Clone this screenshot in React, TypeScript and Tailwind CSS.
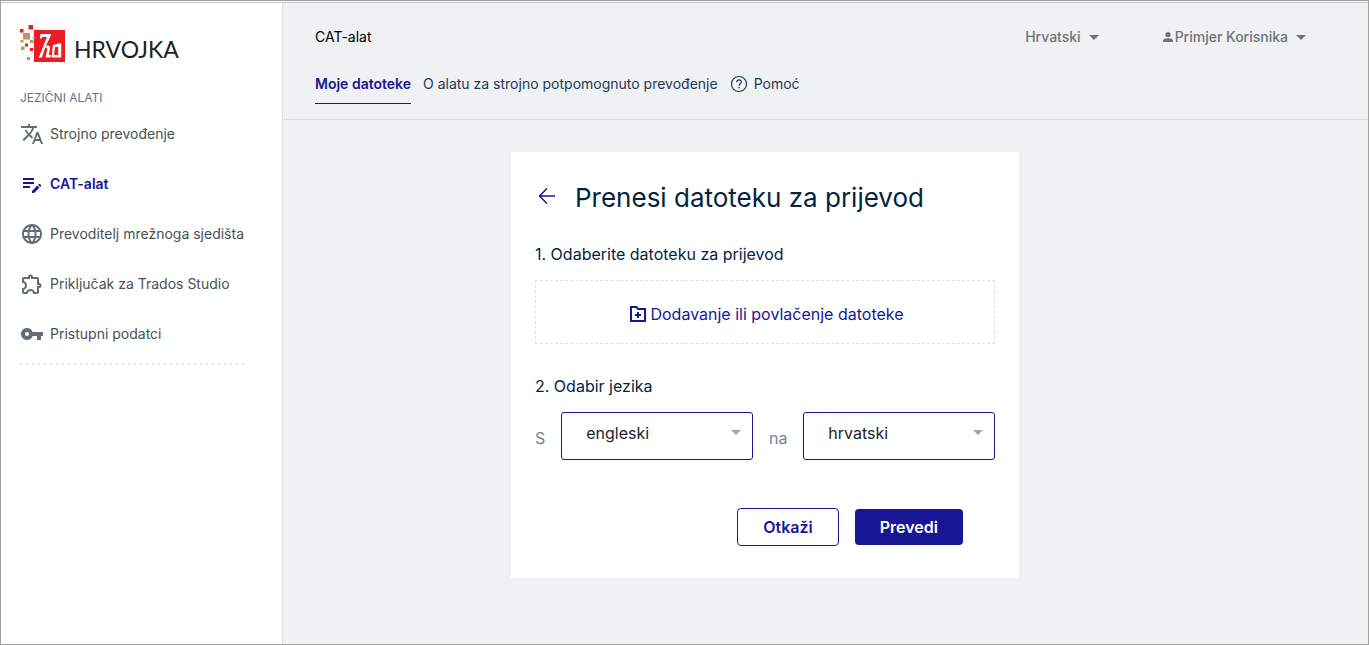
import {
  MdTranslate,
  MdEditNote,
  MdLanguage,
  MdOutlineExtension,
  MdVpnKey,
} from "react-icons/md";

const tools = [
  { name: "Strojno prevođenje", icon: MdTranslate },
  { name: "CAT-alat", icon: MdEditNote, active: true },
  { name: "Prevoditelj mrežnoga sjedišta", icon: MdLanguage },
  { name: "Priključak za Trados Studio", icon: MdOutlineExtension },
  { name: "Pristupni podatci", icon: MdVpnKey },
];

const Caret = ({ className = "" }) => (
  <svg viewBox="0 0 10 5" fill="currentColor" className={`w-[10px] h-[5px] ${className}`}>
    <path d="M0 0h10L5 5z" />
  </svg>
);

const Logo = () => (
  <a href="#" className="flex items-start gap-2 text-[#231f20]">
    <svg viewBox="0 0 46 38" className="w-[46px] h-[38px]">
      <path fill="#ed1c24" d="M14 5h31v32H14zM8.500 0h4.500v4.500H8.500zM0 4h3.500v3.500H0zM5 18.500h3v3H5zM10 23h3v3h-3z" />
      <path fill="#c0945c" d="M3 8h7v6.500H3zM10 15h3.500v3H10zM0.500 15h3v2.500h-3zM1 21.500h3.500v3.500H1zM7 32h3v3H7zM13 12h2v2h-2z" />
      <path
        fill="#fff"
        fillRule="evenodd"
        d="M20.500 9H31l-.6 2.500-4.600 9.500c2.200-1.300 4.700-.6 4.200 2.500L28.800 30h2.200l-.4 2.500h-5l1.600-9c.2-1.500-1.400-1.200-2.600.5L22 32.500h-3.200L27 12h-5l-.5 1.500h-1.600zM33 20l5.500-1.500h2.700V32.500H31.500zM35 22l-1 8h4.200v-8z"
      />
    </svg>
    <span className="font-['Lato'] text-[23px] leading-6 pt-3">HRVOJKA</span>
  </a>
);

const Sidebar = () => {
  return (
    <aside className="w-[282px] shrink-0 bg-white border-r border-[#dcdde0] pl-[19px] pr-[34px] pt-[22px]">
      <Logo />
      <p className="mt-[27px] text-xs leading-4 text-[#5f7183]">JEZIČNI ALATI</p>
      <nav className="mt-4 flex flex-col gap-[26px] text-sm">
        {tools.map(({ name, icon: Icon, active }) => (
          <a
            key={name}
            href="#"
            className={`flex items-center gap-1.5 h-6 ${
              active ? "text-[#171796] font-semibold" : "text-[#495057]"
            }`}
          >
            <Icon className={`size-6 ${active ? "" : "text-[#636d78]"}`} />
            <span>{name}</span>
          </a>
        ))}
      </nav>
      <div className="mt-[17px] h-0.5 w-[228px] bg-[repeating-linear-gradient(to_right,#dee2e6_0_2px,transparent_2px_6px)]" />
    </aside>
  );
};

const Header = () => {
  return (
    <header className="border-b border-[#dcdde0] px-8 pt-6 text-sm">
      <div className="flex items-center justify-between h-5">
        <h1 className="text-black">CAT-alat</h1>
        <div className="flex items-center gap-16 pr-[30px] font-medium text-[#6c757d]">
          <button className="flex items-center gap-2">
            Hrvatski
            <Caret />
          </button>
          <button className="flex items-center gap-2">
            <span className="flex items-center gap-0.5">
              <svg viewBox="0 0 10 10" fill="currentColor" className="size-[10px]">
                <circle cx="5" cy="2.600" r="2.600" />
                <path d="M0 10V8.500C0 7 3 6.200 5 6.200s5 .8 5 2.300V10z" />
              </svg>
              Primjer Korisnika
            </span>
            <Caret />
          </button>
        </div>
      </div>
      <nav className="mt-[25px] mb-[15px] flex items-start gap-3 text-[#1c3b57]">
        <a href="#" className="h-[32px] leading-6 pb-2 border-b border-[#171796] font-semibold text-[#171796]">
          Moje datoteke
        </a>
        <a href="#" className="leading-6">
          O alatu za strojno potpomognuto prevođenje
        </a>
        <a href="#" className="flex items-center gap-1.5 leading-6">
          <svg viewBox="0 0 18 18" fill="none" stroke="currentColor" className="size-[18px]">
            <circle cx="9" cy="9" r="7.500" strokeWidth="1.200" />
            <path d="M6.800 7.200c0-3 4.500-2.900 4.500-.2C11.300 8.700 9 8.800 9 10.700" strokeWidth="1.200" />
            <circle cx="9" cy="12.700" r=".8" fill="currentColor" stroke="none" />
          </svg>
          Pomoć
        </a>
      </nav>
    </header>
  );
};

const LanguageSelect = ({ id, label, languages }: { id: string; label: string; languages: string[] }) => (
  <>
    <label htmlFor={id} className="pt-1 text-[#708496]">
      {label}
    </label>
    <div className="relative flex-1">
      <select
        id={id}
        className="block w-full h-12 appearance-none rounded-[3px] border border-[#171796] bg-white pl-6 pr-8 pb-[6px] text-[#212529]"
      >
        {languages.map((language) => (
          <option key={language}>{language}</option>
        ))}
      </select>
      <Caret className="absolute right-3 top-[18px] text-[#94a5b5] pointer-events-none" />
    </div>
  </>
);

const UploadCard = () => {
  return (
    <form className="mx-auto max-w-[508px] bg-white px-6 pt-[27px] pb-8 text-[#03243f]">
      <div className="flex items-center gap-4 h-9">
        <button type="button" aria-label="Natrag" className="pb-0.5 text-[#171796]">
          <svg viewBox="0 0 24 24" fill="none" stroke="currentColor" strokeWidth="1.500" className="size-6">
            <path d="M20 12H4.500M12 4.500 4.500 12l7.500 7.500" />
          </svg>
        </button>
        <h2 className="text-[26px]">Prenesi datoteku za prijevod</h2>
      </div>

      <p className="mt-[27px] leading-6">1. Odaberite datoteku za prijevod</p>
      <label className="mt-[14px] flex h-16 cursor-pointer items-center justify-center gap-1 border border-dashed border-[#dee2e6] pl-1 pt-1 text-[#171796]">
        <svg viewBox="0 0 16 16" fill="none" stroke="currentColor" strokeWidth="2" className="size-4">
          <path d="M1 1h5.500l1.500 2H15v12H1z" />
          <path d="M8 6v6M5 9h6" />
        </svg>
        Dodavanje ili povlačenje datoteke
        <input type="file" className="sr-only" />
      </label>

      <p className="mt-[30px] leading-6">2. Odabir jezika</p>
      <div className="mt-[14px] flex items-center gap-4">
        <LanguageSelect id="source" label="S" languages={["engleski", "hrvatski"]} />
        <LanguageSelect id="target" label="na" languages={["hrvatski", "engleski"]} />
      </div>

      <div className="mt-12 mr-8 flex items-center justify-end gap-4 font-semibold">
        <button type="button" className="h-[38px] rounded border border-[#171796] px-[25px] text-[#171796]">
          Otkaži
        </button>
        <button type="submit" className="h-9 rounded bg-[#171796] px-[25px] text-white">
          Prevedi
        </button>
      </div>
    </form>
  );
};

export default function App() {
  return (
    <div className="min-h-screen flex flex-col border border-[#a0a0a0] bg-white pt-px font-['Inter',sans-serif]">
      <div className="flex flex-1 border-t border-[#c8c6c8]">
        <Sidebar />
        <div className="flex-1 bg-[#f0f1f3]">
          <Header />
          <main className="max-w-[964px] px-8 py-8">
            <UploadCard />
          </main>
        </div>
      </div>
    </div>
  );
}
